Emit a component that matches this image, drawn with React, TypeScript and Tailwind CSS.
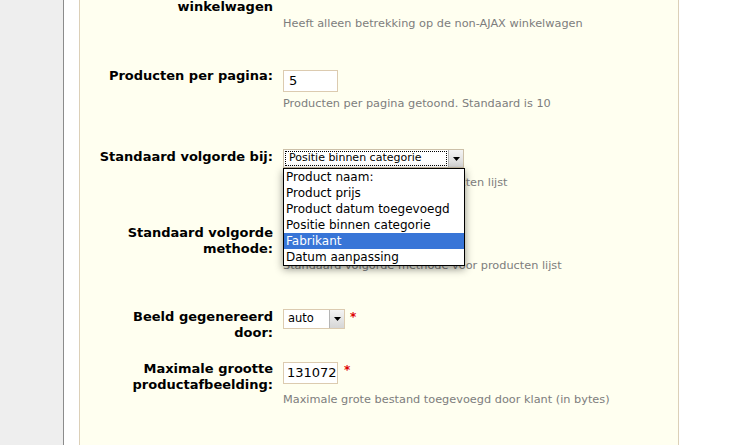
import React from "react";

const font = { fontFamily: '"DejaVu Sans", Verdana, sans-serif' };

function Label({ children }: { children: React.ReactNode }) {
  return (
    <div className="w-[193px] shrink-0 text-right text-[13px] font-bold leading-[16px] text-black">
      {children}
    </div>
  );
}

function Help({ children, className = "" }: { children: React.ReactNode; className?: string }) {
  return <div className={"text-[11.3px] leading-[14px] text-[#7d7d7d] whitespace-nowrap " + className}>{children}</div>;
}

function Arrow() {
  return (
    <div className="flex h-full w-[15px] items-center justify-center border-l border-[#b5b5b5] bg-gradient-to-b from-[#f4f4f4] to-[#d6d6d6]">
      <svg width="7" height="4" viewBox="0 0 7 4">
        <path d="M0 0H7L3.5 4Z" fill="#000" />
      </svg>
    </div>
  );
}

export default function App() {
  return (
    <div className="flex h-[445px] w-[729px] overflow-hidden bg-white" style={font}>
      <div className="w-[64px] shrink-0 border-r border-[#8c8c8c] bg-[#eeeeee]" />
      <div className="w-[15px] shrink-0 bg-white" />
      <div className="relative w-[600px] shrink-0 border-x border-[#dcd0b8] bg-[#fffff0]">
        {/* Row 1 */}
        <div className="mt-[-17px] flex">
          <Label>
            Ajax-
            <br />
            winkelwagen
          </Label>
          <div className="ml-[10px]">
            <div className="h-[34px]" />
            <Help>Heeft alleen betrekking op de non-AJAX winkelwagen</Help>
          </div>
        </div>

        {/* Row 2 */}
        <div className="mt-[37px] flex">
          <Label>Producten per pagina:</Label>
          <div className="ml-[10px]">
            <div className="mt-[2px] flex h-[22px] w-[55px] items-center border border-[#dccbb0] bg-white pl-[5px] text-[13px] text-black">
              5
            </div>
            <Help className="mt-[5px]">Producten per pagina getoond. Standaard is 10</Help>
          </div>
        </div>

        {/* Row 3 */}
        <div className="mt-[38px] flex">
          <Label>Standaard volgorde bij:</Label>
          <div className="relative ml-[10px]">
            <div className="flex h-[19px] w-[181px] items-stretch border border-[#ccc0a8] bg-white">
              <div className="m-[1px] flex flex-1 items-center border border-dotted border-black pl-[3px] text-[11px] text-black">
                Positie binnen categorie
              </div>
              <Arrow />
            </div>
            <Help className="mt-[8px]">Standaard volgorde voor producten lijst</Help>
            {/* Open dropdown list */}
            <div className="absolute left-0 top-[19px] z-10 w-[182px] border border-black bg-white py-0 shadow-[0_3px_8px_rgba(0,0,0,0.45)]">
              {[
                "Product naam:",
                "Product prijs",
                "Product datum toegevoegd",
                "Positie binnen categorie",
                "Fabrikant",
                "Datum aanpassing",
              ].map((t) => (
                <div
                  key={t}
                  className={
                    "h-[16px] pl-[2px] text-[12px] leading-[16px] " +
                    (t === "Fabrikant" ? "bg-[#3875d7] text-white" : "text-black")
                  }
                >
                  {t}
                </div>
              ))}
            </div>
          </div>
        </div>

        {/* Row 4 */}
        <div className="mt-[35px] flex">
          <Label>
            Standaard volgorde
            <br />
            methode:
          </Label>
          <div className="ml-[10px]">
            <div className="flex h-[19px] w-[100px] items-stretch border border-[#ccc0a8] bg-white">
              <div className="flex flex-1 items-center pl-[4px] text-[11px]">Oplopend</div>
              <Arrow />
            </div>
            <Help className="mt-[15px]">Standaard volgorde methode voor producten lijst</Help>
          </div>
        </div>

        {/* Row 5 */}
        <div className="mt-[36px] flex">
          <Label>
            Beeld gegenereerd
            <br />
            door:
          </Label>
          <div className="ml-[10px] flex items-start">
            <div className="flex h-[20px] w-[62px] items-stretch border border-[#dccbb0] bg-white">
              <div className="flex flex-1 items-center pl-[4px] text-[11.5px] text-black">auto</div>
              <Arrow />
            </div>
            <span className="ml-[5px] text-[12px] font-bold leading-[16px] text-[#dd0000]">*</span>
          </div>
        </div>

        {/* Row 6 */}
        <div className="mt-[20px] flex">
          <Label>
            Maximale grootte
            <br />
            productafbeelding:
          </Label>
          <div className="ml-[10px]">
            <div className="flex items-start">
              <div className="mt-[1px] flex h-[22px] w-[55px] items-center overflow-hidden border border-[#dccbb0] bg-white pl-[3px] text-[13px] text-black">
                131072
              </div>
              <span className="ml-[6px] mt-[1px] text-[12px] font-bold leading-[16px] text-[#dd0000]">*</span>
            </div>
            <Help className="mt-[9px]">Maximale grote bestand toegevoegd door klant (in bytes)</Help>
          </div>
        </div>

        {/* Row 7 */}
        <div className="mt-[36px] flex">
          <Label>Breedte afbeelding:</Label>
          <div className="ml-[10px]">
            <div className="mt-[2px] flex h-[22px] w-[55px] items-center border border-[#dccbb0] bg-white pl-[5px] text-[13px]">
              150
            </div>
          </div>
        </div>
      </div>
      <div className="flex-1 bg-white" />
    </div>
  );
}
